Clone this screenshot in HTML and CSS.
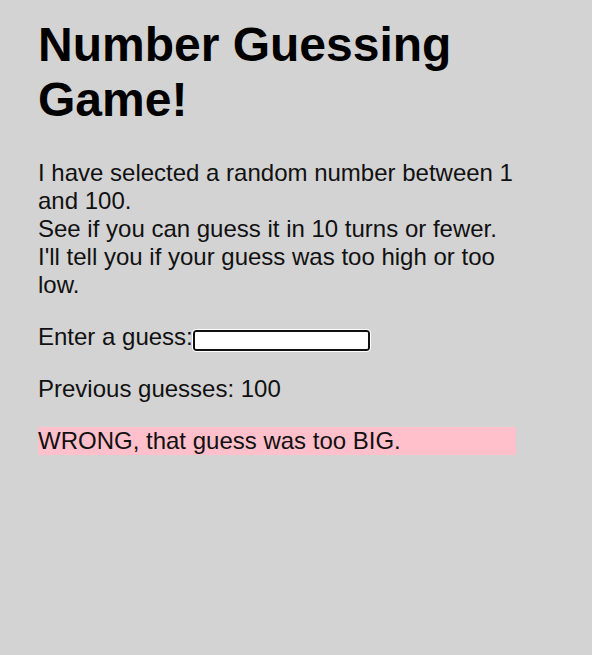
FILE: index.html
```html
<!DOCTYPE html>
<html lang="en">
<head>
<meta charset="utf-8">
<title>Number guessing game</title>
<link rel="stylesheet" href="styles.css">
</head>
<body>
<main class="game">
  <h1 class="title">Number Guessing Game!</h1>
  <p class="intro">I have selected a random number between 1 and 100.<br>See if you can guess it in 10 turns or fewer. I'll tell you if your guess was too high or too low.</p>
  <p class="form-row"><label class="label" for="guessField">Enter a guess:</label><input type="text" id="guessField" class="guess-field"></p>
  <p class="guesses">Previous guesses: 100</p>
  <p class="last-result">WRONG, that guess was too BIG.</p>
</main>
</body>
</html>
```

FILE: styles.css
```css
html {
  background: #d3d3d3;
}

body {
  margin: 0;
  font-family: "Liberation Sans", Arial, sans-serif;
  font-size: 24px;
  color: #111;
}

.game {
  width: 478px;
  margin-left: 38px;
  padding-top: 17px;
}

.title {
  font-size: 48px;
  font-weight: bold;
  color: #000;
  margin: 0 0 32px;
}

.intro,
.form-row,
.guesses,
.last-result {
  margin: 24px 0;
}

.intro {
  margin-top: 0;
}

.guess-field {
  box-sizing: border-box;
  width: 177px;
  height: 21px;
  padding: 1px 2px;
  border: 2px solid #101010;
  border-radius: 3px;
  outline: 1px solid #fff;
  background: #fff;
  font-family: "Liberation Sans", Arial, sans-serif;
  font-size: 13.33px;
  vertical-align: baseline;
}

.last-result {
  background: pink;
}
```
